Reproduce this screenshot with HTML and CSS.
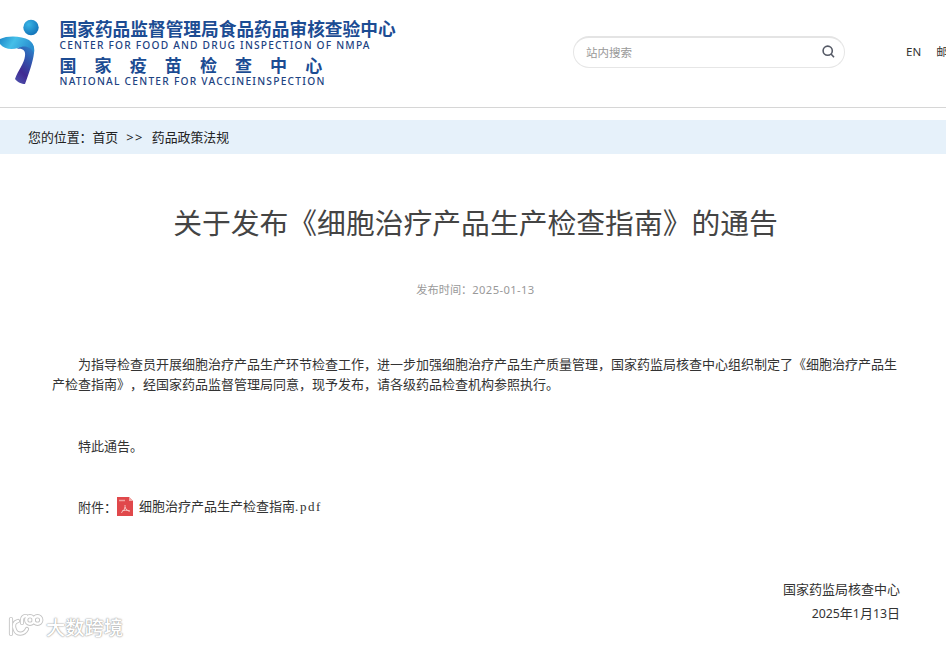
FILE: index.html
```html
<!DOCTYPE html>
<html lang="zh-CN">
<head>
  <meta charset="UTF-8" />
  <meta name="viewport" content="width=device-width, initial-scale=1.0"/>
  <title>关于发布《细胞治疗产品生产检查指南》的通告</title>
  <link rel="stylesheet" href="styles.css">
</head>
<body>

  <!-- HEADER -->
  <header class="header">
    <div class="logo">
      <svg class="logo-mark" width="42" height="70" viewBox="0 0 42 70">
        <defs>
          <radialGradient id="ball" cx="35%" cy="30%" r="75%">
            <stop offset="0" stop-color="#39b5e6"/>
            <stop offset="1" stop-color="#1272b8"/>
          </radialGradient>
          <linearGradient id="arm" x1="0" y1="0" x2="1" y2="0.3">
            <stop offset="0" stop-color="#1c86c8"/>
            <stop offset="0.45" stop-color="#45bfe8"/>
            <stop offset="1" stop-color="#2a8fd0"/>
          </linearGradient>
          <linearGradient id="leg" x1="0.7" y1="0" x2="0.3" y2="1">
            <stop offset="0" stop-color="#2d8fd2"/>
            <stop offset="0.4" stop-color="#3155ad"/>
            <stop offset="0.75" stop-color="#402a92"/>
            <stop offset="1" stop-color="#4a4aa8"/>
          </linearGradient>
        </defs>
        <circle cx="31" cy="12.500" r="7.700" fill="url(#ball)"/>
        <path d="M26 25 C32 26 35 31 34 38 C33 47 29 58 25 69 C22 69 17 67 15 64 C18 55 24 49 25 41 C26 35 22 33 17 34 Z" fill="url(#leg)"/>
        <path d="M0 24 C8 20 22 21 29 25 C33 28 35 32 34 38 C31 31 24 30 18 33 C11 35 4 34 0 29 Z" fill="url(#arm)"/>
      </svg>
      <div class="logo-text">
        <div class="logo-cn">国家药品监督管理局食品药品审核查验中心</div>
        <div class="logo-en">CENTER FOR FOOD AND DRUG INSPECTION OF NMPA</div>
        <div class="logo-cn logo-cn-wide">国家疫苗检查中心</div>
        <div class="logo-en logo-en-second">NATIONAL CENTER FOR VACCINEINSPECTION</div>
      </div>
    </div>

    <div class="search">
      <span>站内搜索</span>
      <svg width="13" height="13" viewBox="0 0 13 13" fill="none" stroke="#555a66" stroke-width="1.6">
        <circle cx="5.700" cy="5.700" r="4.600"/>
        <path d="M9 9 L12 12.300"/>
      </svg>
    </div>

    <nav class="links">
      <a>EN</a>
      <a>邮箱</a>
    </nav>
  </header>

  <!-- BREADCRUMB -->
  <div class="breadcrumb">
    <span>您的位置：</span><a>首页</a><span class="sep">&gt;&gt;</span><a>药品政策法规</a>
  </div>

  <!-- ARTICLE -->
  <main class="article">
    <h1>关于发布《细胞治疗产品生产检查指南》的通告</h1>
    <div class="date">发布时间：<span>2025-01-13</span></div>

    <div class="content">
      <p>为指导检查员开展细胞治疗产品生产环节检查工作，进一步加强细胞治疗产品生产质量管理，国家药监局核查中心组织制定了《细胞治疗产品生产检查指南》，经国家药品监督管理局同意，现予发布，请各级药品检查机构参照执行。</p>
      <p class="notice">特此通告。</p>
      <div class="attachment">
        <span>附件：</span>
        <svg width="16" height="19" viewBox="0 0 16 19">
          <path d="M0 0 H12 L16 4 V19 H0 Z" fill="#e0484b"/>
          <path d="M12 0 L16 4 H12 Z" fill="#f3a9a6"/>
          <path d="M2 3.500 H8" stroke="#f0a09e" stroke-width="1.500"/>
          <path d="M8 8 C8.500 12 6 15 4 15.500 M8 10 C9 13 11 14 13 14 M5 14 C7 13 10 13 12.500 14" fill="none" stroke="#f9d0ce" stroke-width="0.900"/>
        </svg>
        <a>细胞治疗产品生产检查指南<span class="ext">.pdf</span></a>
      </div>
      <div class="sign">
        <div>国家药监局核查中心</div>
        <div><span class="num">2025</span>年<span class="num">1</span>月<span class="num">13</span>日</div>
      </div>
    </div>
  </main>

  <!-- WATERMARK -->
  <div class="watermark">
    <svg width="36" height="26" viewBox="0 0 36 26" fill="none" stroke-linecap="round">
      <g stroke="#c4c4c4" stroke-width="4.200">
        <path d="M3 6 V21 M10 8 C6 9 5 12 7 17 C9 22 16 22 19 16"/>
        <path d="M14 10 V7 C14 4 16 3 18 3"/>
        <circle cx="22" cy="7" r="3.800"/>
        <circle cx="29.500" cy="7" r="3.800"/>
      </g>
      <g stroke="#fff" stroke-width="2.400">
        <path d="M3 6 V21 M10 8 C6 9 5 12 7 17 C9 22 16 22 19 16"/>
        <path d="M14 10 V7 C14 4 16 3 18 3"/>
        <circle cx="22" cy="7" r="3.800"/>
        <circle cx="29.500" cy="7" r="3.800"/>
      </g>
    </svg>
    <span>大数跨境</span>
  </div>

</body>
</html>
```
FILE: styles.css
```css
* { margin: 0; padding: 0; box-sizing: border-box; }
body {
  font-family: "Noto Sans", "Noto Sans CJK SC", sans-serif;
  background: #fff;
  color: #333;
  height: 645px;
  overflow: hidden;
  text-spacing-trim: space-all;
}
.header {
  height: 108px;
  border-bottom: 1px solid #d6d6d6;
  display: flex;
  align-items: flex-start;
  overflow: hidden;
}
.logo {
  display: flex;
  width: 573px;
  flex-shrink: 0;
  padding-top: 15px;
}
.logo-mark {
  margin-right: 17.5px;
}
.logo-text {
  padding-top: 4px;
  color: #1d4382;
  white-space: nowrap;
}
.logo-cn {
  font-size: 17.7px;
  line-height: 20px;
  font-weight: 700;
  color: #1c4c93;
}
.logo-cn-wide {
  font-size: 17px;
  letter-spacing: 18.1px;
  margin-top: 4px;
}
.logo-en {
  font-size: 10.2px;
  line-height: 13px;
  font-weight: 500;
  letter-spacing: 1.2px;
}
.logo-en-second {
  line-height: 10px;
  letter-spacing: 1.25px;
}
.search {
  width: 272px;
  height: 32px;
  flex-shrink: 0;
  margin-top: 36px;
  border: 1px solid #e6e6e6;
  border-top: 2px solid #e4e4e4;
  border-radius: 16px;
  padding: 0 9px 2px 12px;
  display: flex;
  align-items: center;
  justify-content: space-between;
  font-size: 11.5px;
  color: #999;
}
.links {
  display: flex;
  gap: 15px;
  flex-shrink: 0;
  margin: 44px 0 0 61px;
  font-size: 11.5px;
  line-height: 16px;
  white-space: nowrap;
}
.breadcrumb {
  height: 34px;
  margin-top: 12px;
  padding-left: 28px;
  background: #e6f1fa;
  font-size: 12.9px;
  line-height: 34px;
  color: #222;
}
.sep {
  margin: 0 8px;
  letter-spacing: 1.4px;
}
.article h1 {
  margin-top: 48px;
  padding-left: 5px;
  font-size: 28.8px;
  line-height: 42px;
  font-weight: 400;
  color: #444;
  text-align: center;
}
.date {
  margin-top: 38px;
  padding-left: 5px;
  font-size: 11.2px;
  line-height: 16px;
  color: #999;
  text-align: center;
}
.date span {
  letter-spacing: 0.4px;
}
.content {
  margin: 56px 46px 0 52px;
  font-size: 13px;
  line-height: 20px;
}
.content p {
  text-indent: 26px;
}
.content .notice {
  margin-top: 42px;
}
.attachment {
  display: flex;
  align-items: center;
  margin-top: 40px;
  padding-left: 26px;
}
.attachment svg {
  margin-right: 6px;
}
.ext {
  font-family: "Liberation Serif", serif;
  letter-spacing: 1.6px;
}
.num {
  font-size: 12.3px;
}
.sign {
  margin-top: 60px;
  line-height: 24px;
  text-align: right;
}
.watermark {
  position: absolute;
  left: 8px;
  top: 613px;
  display: flex;
  font-size: 19.3px;
  line-height: 29px;
  font-weight: 500;
  color: #fff;
  text-shadow: 0 0 2px #999, 0 0 1px #999;
}
.watermark span {
  margin-left: 2px;
}
```
